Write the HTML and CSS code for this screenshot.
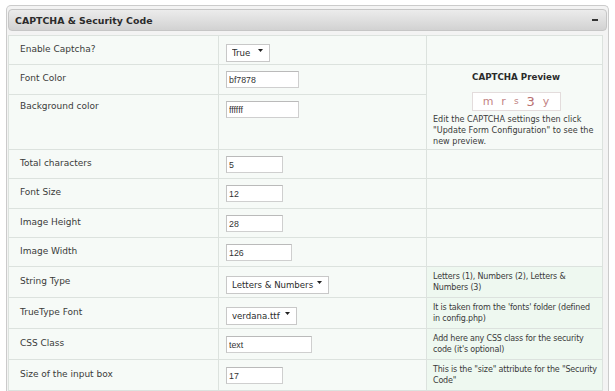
FILE: index.html
```html
<!DOCTYPE html>
<html lang="en">
<head>
    <meta charset="UTF-8">
    <title>CAPTCHA &amp; Security Code</title>
    <link rel="stylesheet" href="styles.css">
</head>
<body>
    <div class="panel">
        <div class="panel-header">
            <span class="panel-title">CAPTCHA &amp; Security Code</span>
            <span class="panel-toggle"></span>
        </div>

        <table class="settings">
            <colgroup>
                <col class="col-label">
                <col class="col-field">
                <col class="col-desc">
            </colgroup>
            <tr>
                <td class="label">Enable Captcha?</td>
                <td class="field">
                    <span class="select w-true">
                        <select><option>True</option><option>False</option></select>
                        <svg class="arrow" width="5" height="3" viewBox="0 0 5 3"><path d="M0 0H5L2.5 3Z" fill="#222"/></svg>
                    </span>
                </td>
                <td class="desc"></td>
            </tr>
            <tr class="row-font">
                <td class="label">Font Color</td>
                <td class="field"><input class="text-input w-73" type="text" value="bf7878"></td>
                <td class="preview" rowspan="2">
                    <h4>CAPTCHA Preview</h4>
                    <div class="captcha-img">
                        <span class="c1">m</span>
                        <span class="c2">r</span>
                        <span class="c3">s</span>
                        <span class="c4">3</span>
                        <span class="c5">y</span>
                    </div>
                    <p>Edit the CAPTCHA settings then click "Update Form Configuration" to see the new preview.</p>
                </td>
            </tr>
            <tr class="row-bg">
                <td class="label">Background color</td>
                <td class="field"><input class="text-input w-73" type="text" value="ffffff"></td>
            </tr>
            <tr>
                <td class="label">Total characters</td>
                <td class="field"><input class="text-input w-57" type="text" value="5"></td>
                <td class="desc"></td>
            </tr>
            <tr class="row-font">
                <td class="label">Font Size</td>
                <td class="field"><input class="text-input w-57" type="text" value="12"></td>
                <td class="desc"></td>
            </tr>
            <tr>
                <td class="label">Image Height</td>
                <td class="field"><input class="text-input w-57" type="text" value="28"></td>
                <td class="desc"></td>
            </tr>
            <tr>
                <td class="label">Image Width</td>
                <td class="field"><input class="text-input w-66" type="text" value="126"></td>
                <td class="desc"></td>
            </tr>
            <tr class="row-tall">
                <td class="label">String Type</td>
                <td class="field">
                    <span class="select w-string">
                        <select><option>Letters &amp; Numbers</option></select>
                        <svg class="arrow" width="5" height="3" viewBox="0 0 5 3"><path d="M0 0H5L2.5 3Z" fill="#222"/></svg>
                    </span>
                </td>
                <td class="desc note">Letters (1), Numbers (2), Letters &amp; Numbers (3)</td>
            </tr>
            <tr class="row-tall">
                <td class="label">TrueType Font</td>
                <td class="field">
                    <span class="select w-font">
                        <select><option>verdana.ttf</option></select>
                        <svg class="arrow" width="5" height="3" viewBox="0 0 5 3"><path d="M0 0H5L2.5 3Z" fill="#222"/></svg>
                    </span>
                </td>
                <td class="desc note">It is taken from the 'fonts' folder (defined in config.php)</td>
            </tr>
            <tr class="row-tall">
                <td class="label">CSS Class</td>
                <td class="field"><input class="text-input w-86" type="text" value="text"></td>
                <td class="desc note">Add here any CSS class for the security code (it's optional)</td>
            </tr>
            <tr class="row-tall">
                <td class="label">Size of the input box</td>
                <td class="field"><input class="text-input w-57" type="text" value="17"></td>
                <td class="desc note">This is the "size" attribute for the "Security Code"</td>
            </tr>
        </table>
    </div>
</body>
</html>
```

FILE: styles.css
```css
:root {
    --cell-bg: #f6faf7;
    --note-bg: #eef8f0;
    --grid: #dce2de;
    --text-color: #3a3a3a;
}

* {
    margin: 0;
    padding: 0;
    box-sizing: border-box;
}

body {
    font-family: 'DejaVu Sans', Verdana, sans-serif;
    color: var(--text-color);
    background: #ffffff;
    overflow: hidden;
}

.panel {
    width: 603px;
    margin: 5px 0 0 6px;
    padding: 3px 1px 0 1px;
    border: 1px solid #cbcbcb;
    border-bottom: none;
    border-radius: 5px 5px 0 0;
    background: #f3f3f3;
}

.panel-header {
    height: 22px;
    display: flex;
    align-items: center;
    justify-content: space-between;
    padding: 0 8px 0 6px;
    border: 1px solid #c6c6c6;
    border-radius: 4px;
    background: linear-gradient(#ececec, #d2d2d2);
}

.panel-title {
    font-size: 9.4px;
    font-weight: bold;
    color: #2b2b2b;
}

.panel-toggle {
    width: 6px;
    height: 2px;
    background: #333;
}

.settings {
    width: 595px;
    margin-top: 4px;
    border-collapse: collapse;
    border: 1px solid var(--grid);
    background: var(--cell-bg);
}

.col-label { width: 210px; }
.col-field { width: 208px; }

.settings td {
    border: 1px solid var(--grid);
    height: 29px;
    vertical-align: top;
}

.settings .row-font td {
    height: 30px;
}

.settings .row-bg td {
    height: 55px;
}

.settings .row-tall td {
    height: 31px;
}

.label {
    font-size: 9px;
    line-height: 12px;
    padding: 7px 8px 0 11px;
}

.row-tall .label {
    padding-top: 8px;
}

.row-bg .label {
    padding-top: 5px;
}

.field {
    padding: 5px 8px 0 7px;
}

.row-tall .field {
    padding-top: 6px;
}

.desc {
    font-size: 8px;
    line-height: 11px;
    letter-spacing: -0.18px;
    padding: 4px 5px 0 6px;
}

.note {
    background: var(--note-bg);
}

.text-input {
    display: block;
    height: 17px;
    margin-top: 1px;
    padding: 0 2px;
    border: 1px solid #cfcfcf;
    border-top-color: #bababa;
    border-left-color: #c4c4c4;
    background: #ffffff;
    font-family: 'Liberation Sans', Arial, sans-serif;
    font-size: 8.8px;
    color: #333;
    outline: none;
}

.w-57 { width: 57px; }
.w-66 { width: 66px; }
.w-73 { width: 73px; }
.w-86 { width: 86px; }

.select {
    position: relative;
    display: block;
    height: 18px;
}

.select select {
    appearance: none;
    -webkit-appearance: none;
    width: 100%;
    height: 18px;
    padding: 0 14px 0 5px;
    border: 1px solid #c8c8c8;
    border-radius: 0;
    background: #ffffff;
    font-family: 'DejaVu Sans', Verdana, sans-serif;
    font-size: 8.6px;
    color: #2b2b2b;
}

.select .arrow {
    position: absolute;
    right: 7px;
    top: 8px;
}

.w-true { width: 44px; }
.w-string { width: 103px; }
.w-font { width: 71px; }

.settings .preview {
    height: auto;
    padding: 6px 3px 0 6px;
}

.preview h4 {
    font-size: 8.7px;
    line-height: 12px;
    text-align: center;
    color: #2b2b2b;
}

.captcha-img {
    width: 89px;
    height: 19px;
    margin: 9px auto 0;
    display: flex;
    align-items: center;
    justify-content: center;
    gap: 8px;
    border: 1px solid #e3dcdc;
    background: #ffffff;
    color: #c28383;
    line-height: 1;
}

.c1 { font-size: 11px; }
.c2 { font-size: 11px; }
.c3 { font-size: 9px; }
.c4 { font-size: 13px; color: #b87070; }
.c5 { font-size: 11px; }

.preview p {
    margin-top: 3px;
    font-size: 8.1px;
    line-height: 11px;
}
```
